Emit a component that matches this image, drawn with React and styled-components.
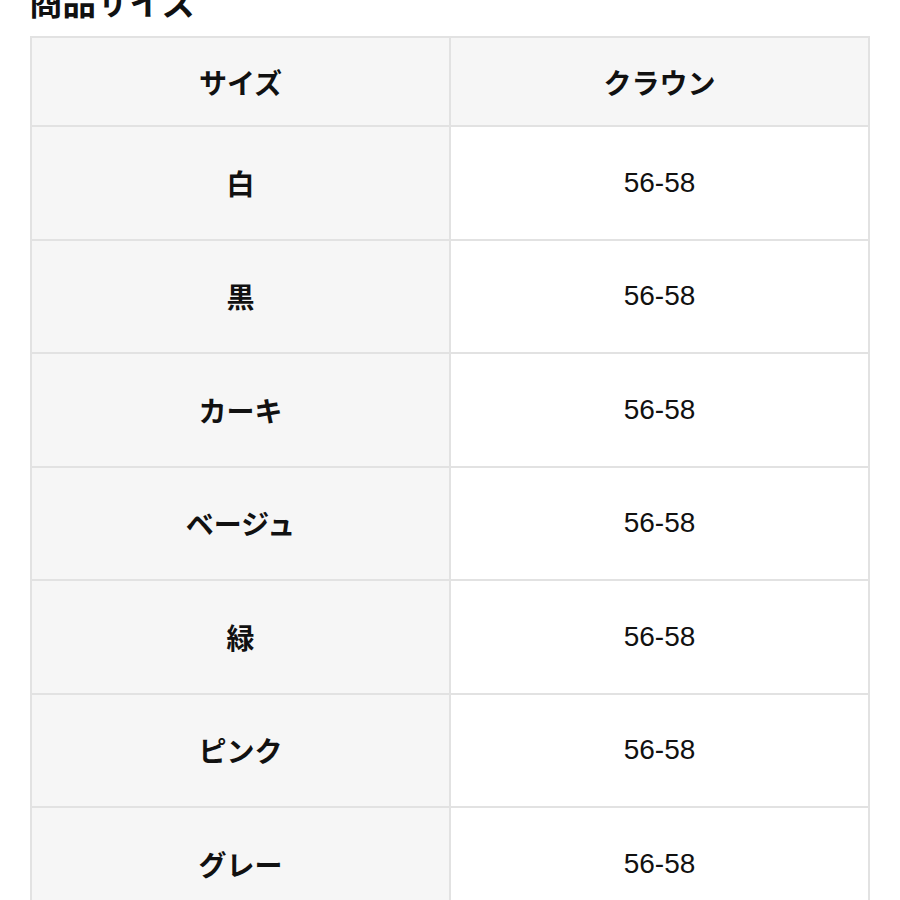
import React from "react";
import styled, { createGlobalStyle } from "styled-components";

const Global = createGlobalStyle`
  html, body { margin: 0; padding: 0; background: #fff; }
  body { font-family: "Liberation Sans", "Noto Sans CJK JP", sans-serif; color: #111; }
`;

const Page = styled.div`
  padding: 0 30px;
  overflow: hidden;
  height: 900px;
`;

const Title = styled.h2`
  margin: -16px 0 19px -1px;
  font-family: "Noto Sans CJK JP", sans-serif;
  font-size: 33.5px;
  line-height: 33px;
  font-weight: 700;
  color: #111;
`;

const Table = styled.table`
  width: 840px;
  border-collapse: collapse;
  table-layout: fixed;
  border: 2px solid #e2e2e2;
`;

const Cell = styled.td`
  border: 2px solid #e2e2e2;
  text-align: center;
  vertical-align: middle;
  padding: 0;
  height: ${(p) => (p.$head ? "87px" : "111.5px")};
  background: ${(p) => (p.$label ? "#f6f6f6" : "#fff")};
  font-family: ${(p) =>
    p.$label || p.$head
      ? `"Noto Sans CJK JP", sans-serif`
      : `"Liberation Sans", "Noto Sans CJK JP", sans-serif`};
  font-weight: ${(p) => (p.$label || p.$head ? 700 : 400)};
  font-size: 28px;
  line-height: 1;
  color: #111;
`;

const rows = ["白", "黒", "カーキ", "ベージュ", "緑", "ピンク", "グレー"];

export default function App() {
  return (
    <Page>
      <Global />
      <Title>商品サイズ</Title>
      <Table>
        <thead>
          <tr>
            <Cell as="th" $head $label>サイズ</Cell>
            <Cell as="th" $head $label>クラウン</Cell>
          </tr>
        </thead>
        <tbody>
          {rows.map((r) => (
            <tr key={r}>
              <Cell as="th" $label>{r}</Cell>
              <Cell>56-58</Cell>
            </tr>
          ))}
        </tbody>
      </Table>
    </Page>
  );
}
